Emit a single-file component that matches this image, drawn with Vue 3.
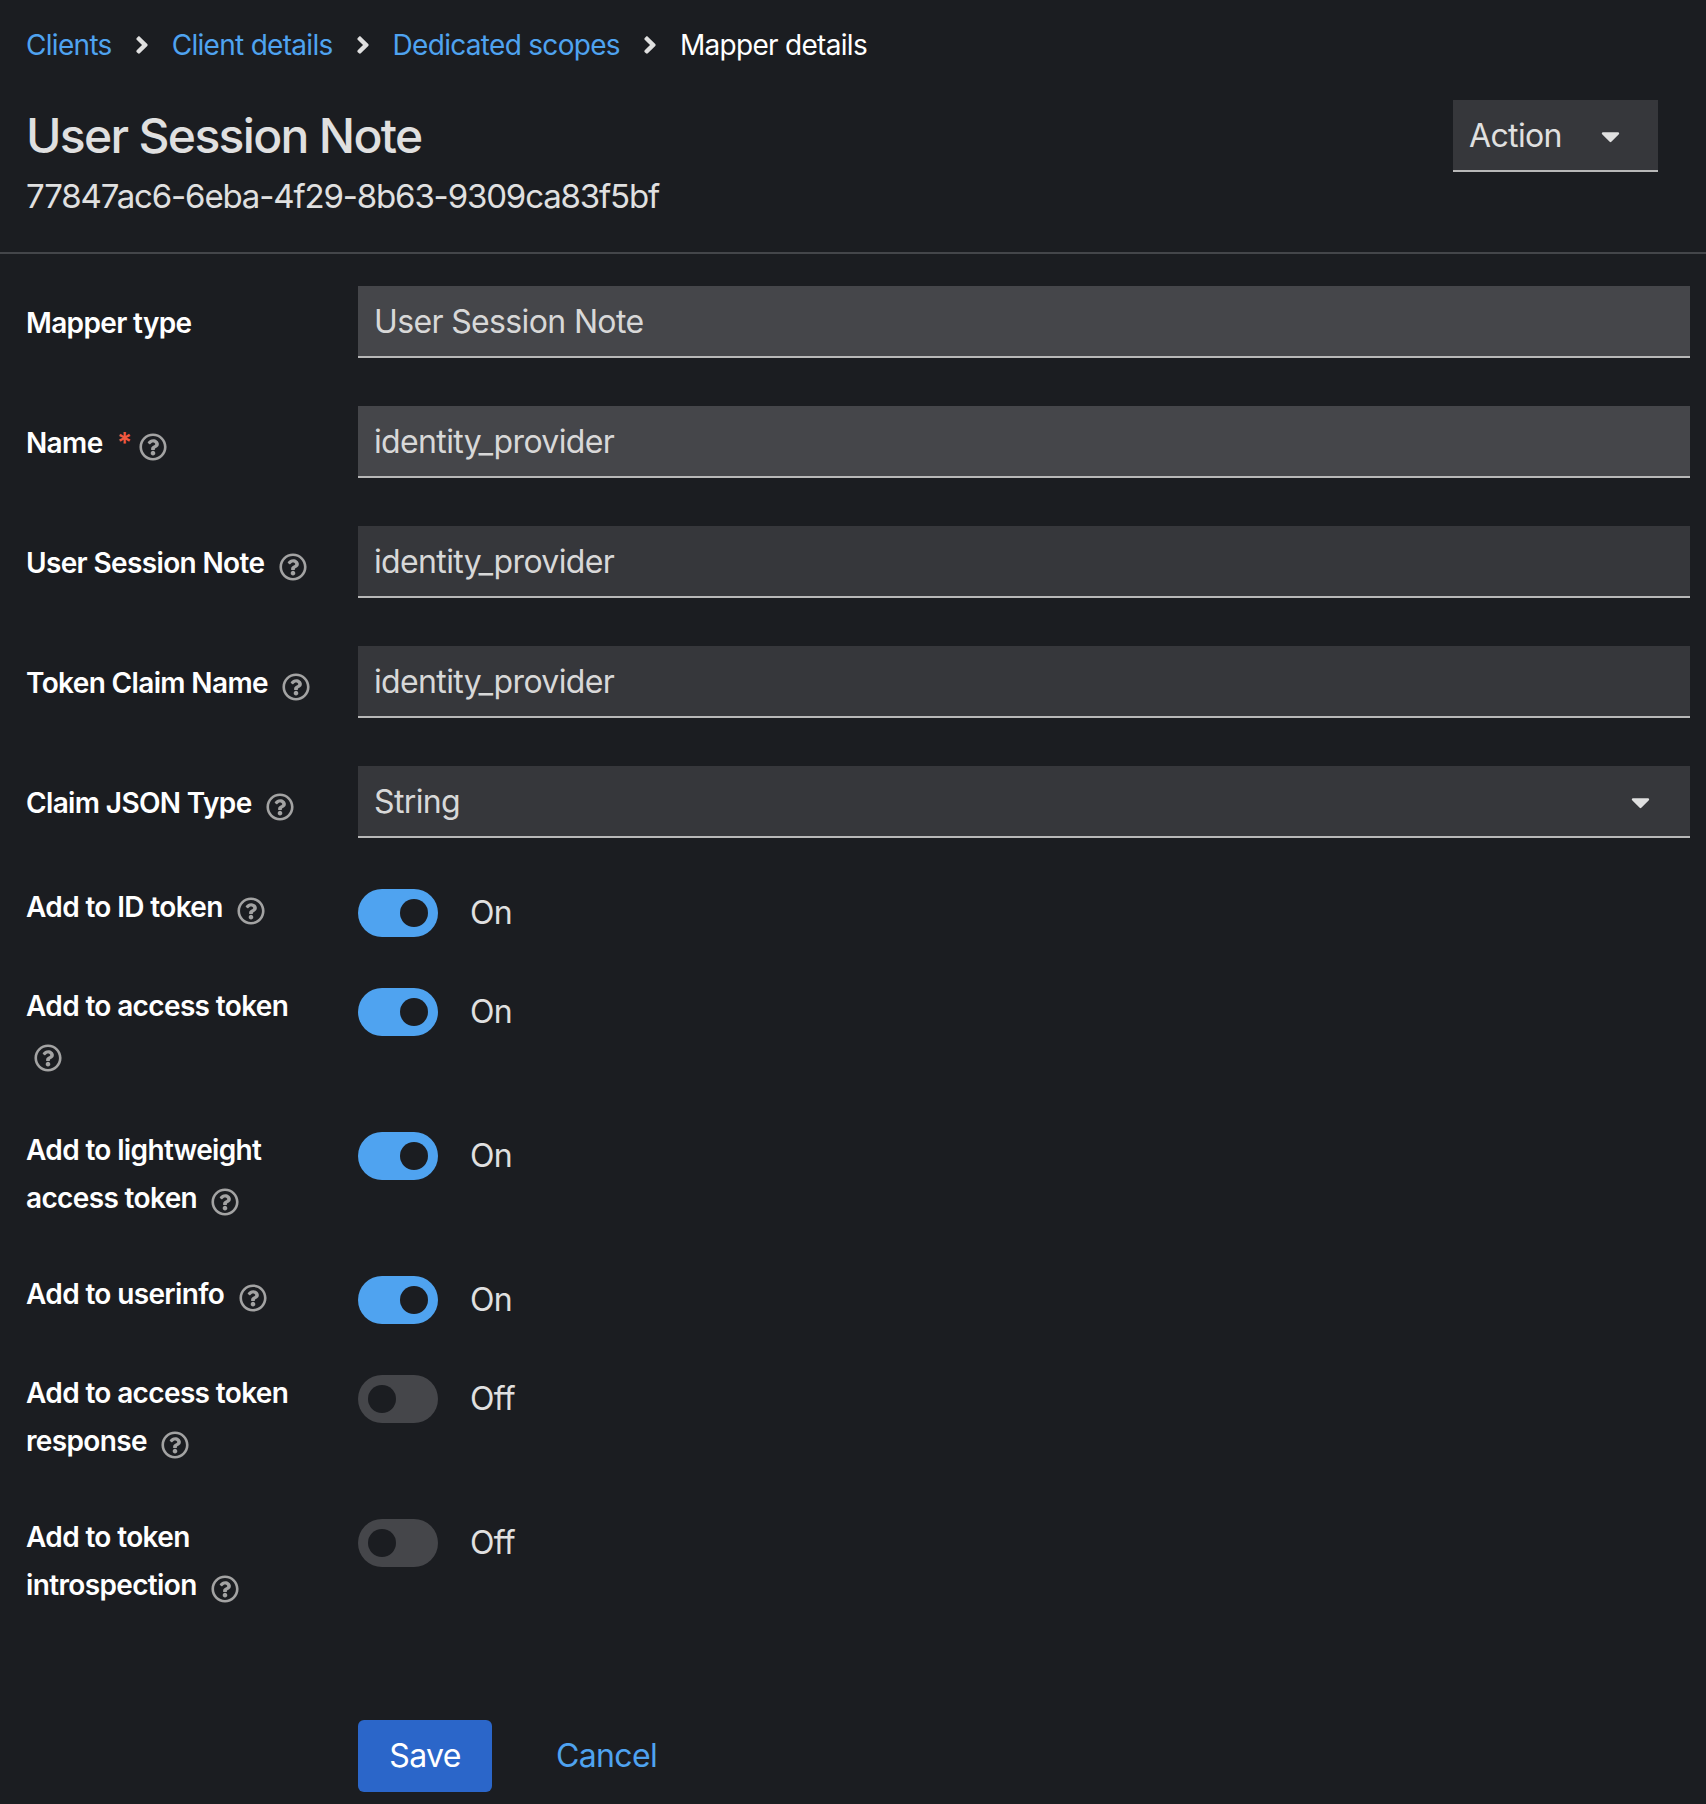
<template>
    <div class="page">
        <nav class="crumbs">
            <template v-for="(c, i) in crumbs" :key="c">
                <a v-if="i < crumbs.length - 1" class="link" href="#">{{ c }}</a>
                <span v-else class="current">{{ c }}</span>
                <svg v-if="i < crumbs.length - 1" class="chev" viewBox="0 0 256 512">
                    <path fill="currentColor" d="M224.3 273l-136 136c-9.4 9.4-24.6 9.4-33.9 0l-22.6-22.6c-9.4-9.4-9.4-24.6 0-33.9l96.4-96.4-96.4-96.4c-9.4-9.4-9.4-24.6 0-33.9L54.3 103c9.4-9.4 24.6-9.4 33.9 0l136 136c9.5 9.4 9.5 24.6.1 34z" />
                </svg>
            </template>
        </nav>

        <header class="head">
            <div>
                <h1 class="title">User Session Note</h1>
                <p class="uuid">77847ac6-6eba-4f29-8b63-9309ca83f5bf</p>
            </div>
            <button class="action" type="button">
                <span>Action</span>
                <svg class="caret" viewBox="0 0 320 512">
                    <path fill="currentColor" :d="caretPath" />
                </svg>
            </button>
        </header>

        <form class="form" @submit.prevent>
            <div v-for="f in fields" :key="f.label" class="row">
                <label class="label field-label">
                    {{ f.label }}
                    <span v-if="f.required" class="req">*</span>
                    <svg v-if="f.help" class="help" viewBox="0 0 512 512">
                        <path fill="currentColor" :d="helpPath" />
                    </svg>
                </label>
                <div class="control" :class="{ strong: f.strong }">
                    <span>{{ f.value }}</span>
                    <svg v-if="f.select" class="caret" viewBox="0 0 320 512">
                        <path fill="currentColor" :d="caretPath" />
                    </svg>
                </div>
            </div>

            <div v-for="t in toggles" :key="t.label + t.on" class="row toggle-row">
                <label class="label">
                    {{ t.label }}
                    <svg class="help" viewBox="0 0 512 512">
                        <path fill="currentColor" :d="helpPath" />
                    </svg>
                </label>
                <div class="toggle-wrap">
                    <span class="switch" :class="{ on: t.on }"><i class="knob"></i></span>
                    <span class="state">{{ t.on ? "On" : "Off" }}</span>
                </div>
            </div>

            <div class="buttons">
                <button class="save" type="button">Save</button>
                <a class="link cancel" href="#">Cancel</a>
            </div>
        </form>
    </div>
</template>

<script setup>
const crumbs = ["Clients", "Client details", "Dedicated scopes", "Mapper details"];

const fields = [
    { label: "Mapper type", value: "User Session Note", strong: true },
    { label: "Name", value: "identity_provider", required: true, help: true, strong: true },
    { label: "User Session Note", value: "identity_provider", help: true },
    { label: "Token Claim Name", value: "identity_provider", help: true },
    { label: "Claim JSON Type", value: "String", help: true, select: true },
];

const toggles = [
    { label: "Add to ID token", on: true },
    { label: "Add to access token", on: true },
    { label: "Add to lightweight access token", on: true },
    { label: "Add to userinfo", on: true },
    { label: "Add to access token response", on: false },
    { label: "Add to token introspection", on: false },
];

const caretPath = "M31.3 192h257.3c17.8 0 26.7 21.5 14.1 34.1L174.1 354.8c-7.8 7.8-20.5 7.8-28.3 0L17.2 226.1C4.6 213.5 13.5 192 31.3 192z";
const helpPath = "M256 8C119.043 8 8 119.083 8 256c0 136.997 111.043 248 248 248s248-111.003 248-248C504 119.083 392.957 8 256 8zm0 448c-110.532 0-200-89.431-200-200 0-110.495 89.472-200 200-200 110.491 0 200 89.471 200 200 0 110.53-89.431 200-200 200zm107.244-255.2c0 67.052-72.421 68.084-72.421 92.863V300c0 6.627-5.373 12-12 12h-45.647c-6.627 0-12-5.373-12-12v-8.659c0-35.745 27.1-50.034 47.579-61.516 17.561-9.845 28.324-16.541 28.324-29.579 0-17.246-21.999-28.693-39.784-28.693-23.189 0-33.894 10.977-48.942 29.969-4.057 5.12-11.46 6.071-16.666 2.124l-27.824-21.098c-5.107-3.872-6.251-11.066-2.644-16.363C184.846 131.491 214.94 112 261.794 112c49.071 0 101.45 38.304 101.45 88.8zM298 368c0 23.159-18.841 42-42 42s-42-18.841-42-42 18.841-42 42-42 42 18.841 42 42z";
</script>

<style>
html,
body {
    margin: 0;
    background: #1b1d21;
}
</style>

<style scoped>
.page {
    width: 1706px;
    min-height: 1804px;
    background: #1b1d21;
    color: #e0e0e0;
    font-family: Inter, "Noto Sans", sans-serif;
    font-size: 32px;
    line-height: 48px;
    letter-spacing: -0.02em;
    overflow: hidden;
}

.link {
    color: #4fa3f0;
    text-decoration: none;
}

.crumbs {
    display: flex;
    align-items: center;
    padding: 21px 0 0 26px;
    height: 48px;
    font-size: 28px;
    letter-spacing: -0.025em;
}

.chev {
    width: 14px;
    height: 28px;
    margin: 0 23px;
    color: #e0e0e0;
}

.current {
    color: #fff;
}

.head {
    display: flex;
    justify-content: space-between;
    align-items: flex-start;
    padding: 31px 48px 32px 26px;
    border-bottom: 2px solid #44464a;
}

.title {
    margin: 0;
    font-size: 48px;
    line-height: 72px;
    font-weight: 500;
    letter-spacing: -0.035em;
    color: #e0e0e0;
}

.uuid {
    margin: 0;
    font-size: 33px;
    line-height: 48px;
    letter-spacing: -0.035em;
}

.action {
    display: flex;
    align-items: center;
    justify-content: space-between;
    width: 205px;
    height: 72px;
    padding: 2px 38px 0 16px;
    border: 0;
    border-bottom: 2px solid #b8b8b8;
    background: #36373b;
    color: #e0e0e0;
    font: inherit;
    letter-spacing: inherit;
}

.caret {
    width: 19px;
    height: 30px;
    color: #e0e0e0;
}

.form {
    display: flex;
    flex-direction: column;
    gap: 48px;
    padding: 32px 16px 0 26px;
}

.row {
    display: grid;
    grid-template-columns: 300px 1fr;
    column-gap: 32px;
}

.label {
    font-size: 28px;
    font-weight: 600;
    color: #fff;
}

.field-label {
    padding-top: 13px;
}

.help {
    width: 28px;
    height: 28px;
    margin-left: 8px;
    vertical-align: -8px;
    color: #a3a3a3;
}

.req {
    color: #f0583f;
    margin-left: 8px;
}

.control {
    display: flex;
    align-items: center;
    justify-content: space-between;
    box-sizing: border-box;
    height: 72px;
    padding: 2px 40px 0 16px;
    background: #36373b;
    border-bottom: 2px solid #b8b8b8;
    color: #d8d8d8;
}

.control.strong {
    background: #45464a;
}

.toggle-row {
    min-height: 51px;
}

.toggle-row .label {
    margin-top: -3px;
    margin-bottom: 3px;
}

.toggle-wrap {
    display: flex;
    align-items: center;
    gap: 32px;
    height: 48px;
    margin-top: 3px;
}

.switch {
    display: flex;
    align-items: center;
    width: 80px;
    height: 48px;
    padding: 0 10px;
    box-sizing: border-box;
    border-radius: 24px;
    background: #45464a;
}

.switch.on {
    justify-content: flex-end;
    background: #4fa3f0;
}

.knob {
    width: 28px;
    height: 28px;
    border-radius: 50%;
    background: #1b1d21;
}

.buttons {
    display: flex;
    align-items: center;
    gap: 64px;
    margin-top: 60px;
    padding-left: 332px;
}

.save {
    width: 134px;
    height: 72px;
    border: 0;
    border-radius: 6px;
    background: #2b66c9;
    color: #fff;
    font: inherit;
    letter-spacing: inherit;
}
</style>
